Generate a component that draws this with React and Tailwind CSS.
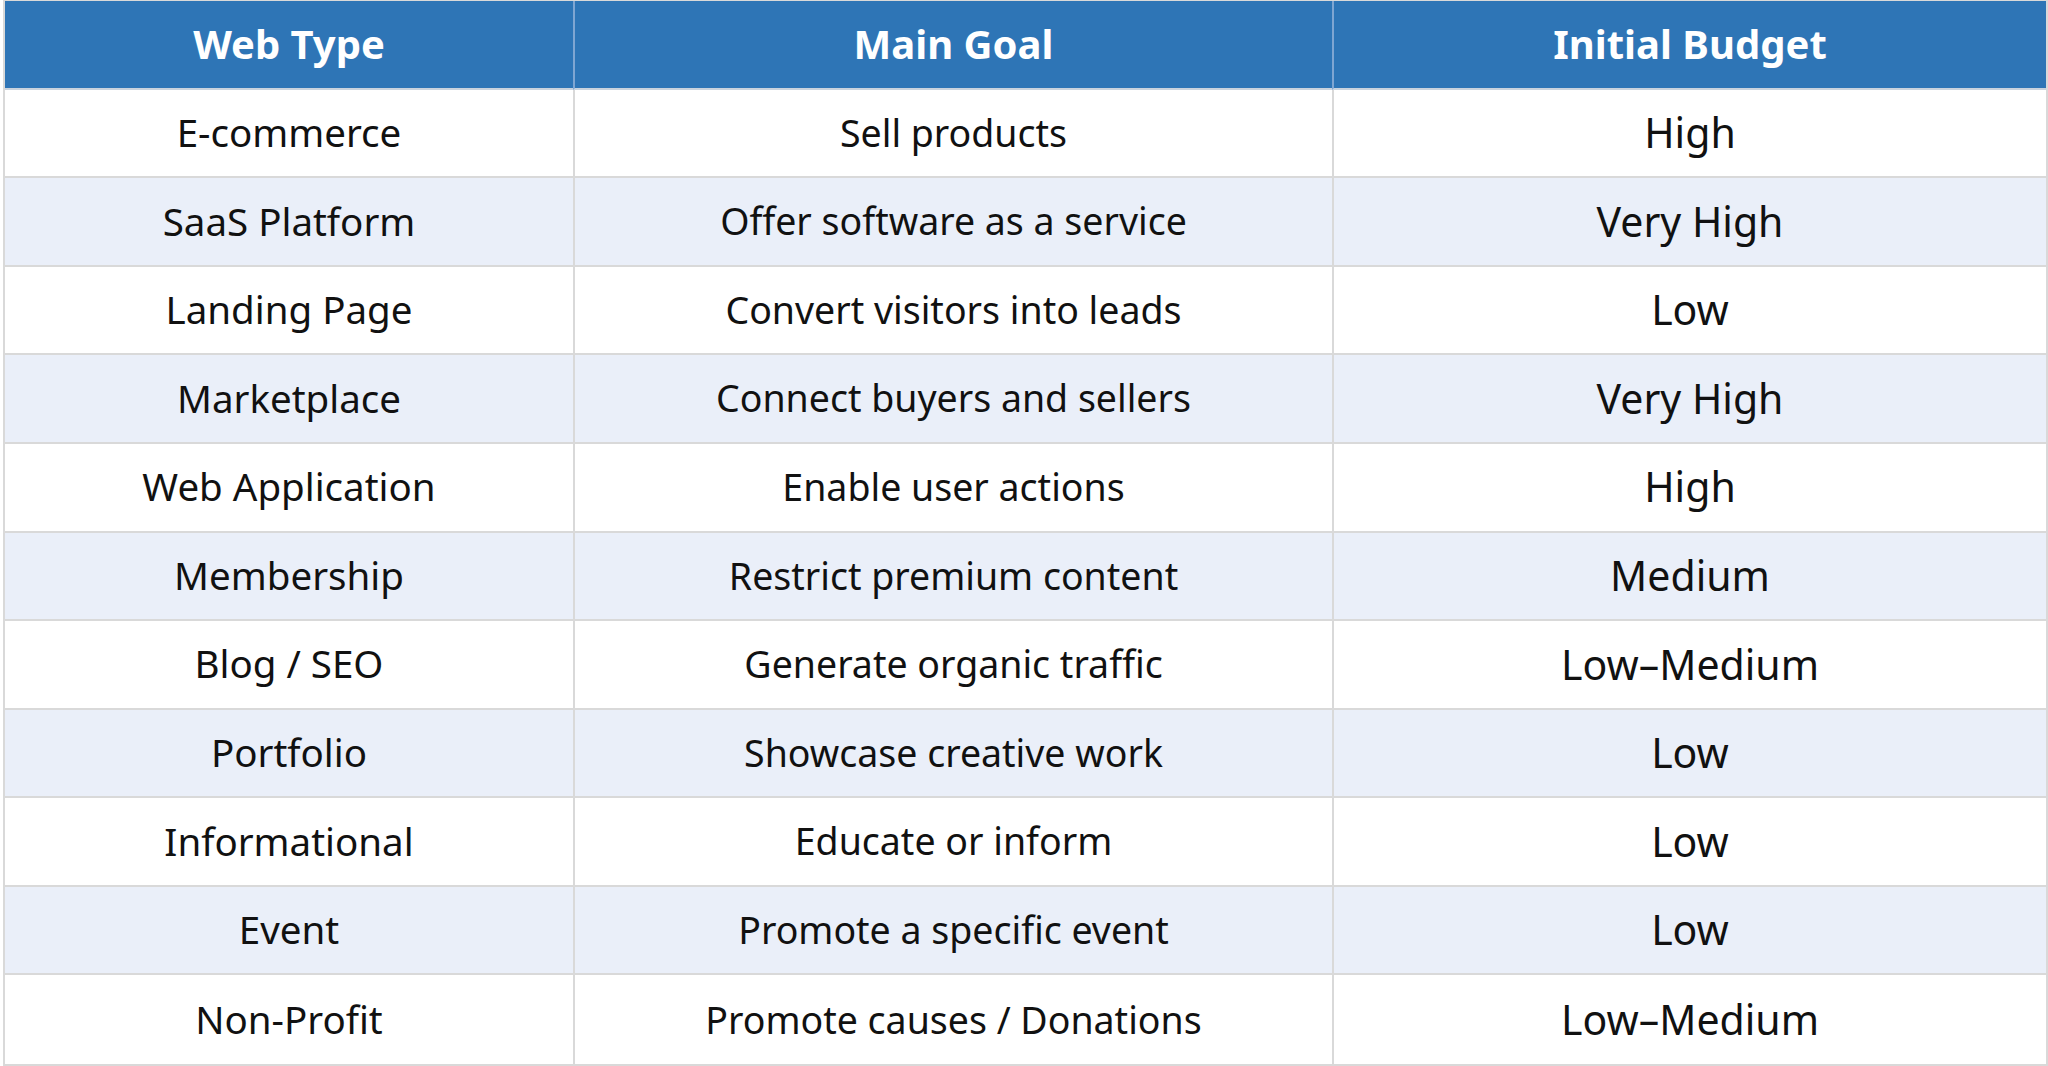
const rows = [
  ["E-commerce", "Sell products", "High"],
  ["SaaS Platform", "Offer software as a service", "Very High"],
  ["Landing Page", "Convert visitors into leads", "Low"],
  ["Marketplace", "Connect buyers and sellers", "Very High"],
  ["Web Application", "Enable user actions", "High"],
  ["Membership", "Restrict premium content", "Medium"],
  ["Blog / SEO", "Generate organic traffic", "Low\u2013Medium"],
  ["Portfolio", "Showcase creative work", "Low"],
  ["Informational", "Educate or inform", "Low"],
  ["Event", "Promote a specific event", "Low"],
  ["Non-Profit", "Promote causes / Donations", "Low\u2013Medium"],
]

const headers = ["Web Type", "Main Goal", "Initial Budget"]

// each column has its own text size in the source sheet
const cellSize = ["text-[38.5px]", "text-[37.5px]", "text-[41px]"]

export default function App() {
  return (
    <div className="w-[2048px] h-[1066px] bg-white pl-[3px] font-['Noto_Sans',sans-serif]">
      <div className="grid grid-cols-[568px_759px_1fr] grid-rows-[repeat(12,1fr)] h-full border-t border-r-2 border-b-2 border-l-2 border-[#d9d9d9]">
        {headers.map((h, i) => (
          <div
            key={h}
            className={`flex items-center justify-center bg-[#2e75b6] text-white font-bold text-[40px] ${
              i > 0 ? "border-l-2 border-[#7fa6d2]" : ""
            } border-b-2 border-b-[#c9d3de]`}
          >
            {h}
          </div>
        ))}
        {rows.map((row, r) =>
          row.map((cell, c) => (
            <div
              key={r + "-" + c}
              className={`flex items-center justify-center ${cellSize[c]} text-[#111] ${
                r % 2 === 1 ? "bg-[#eaeff9]" : "bg-white"
              } ${c > 0 ? "border-l-2 border-l-[#d9d9d9]" : ""} ${
                r < rows.length - 1 ? "border-b-2 border-b-[#d9d9d9]" : ""
              }`}
            >
              {cell}
            </div>
          ))
        )}
      </div>
    </div>
  )
}
